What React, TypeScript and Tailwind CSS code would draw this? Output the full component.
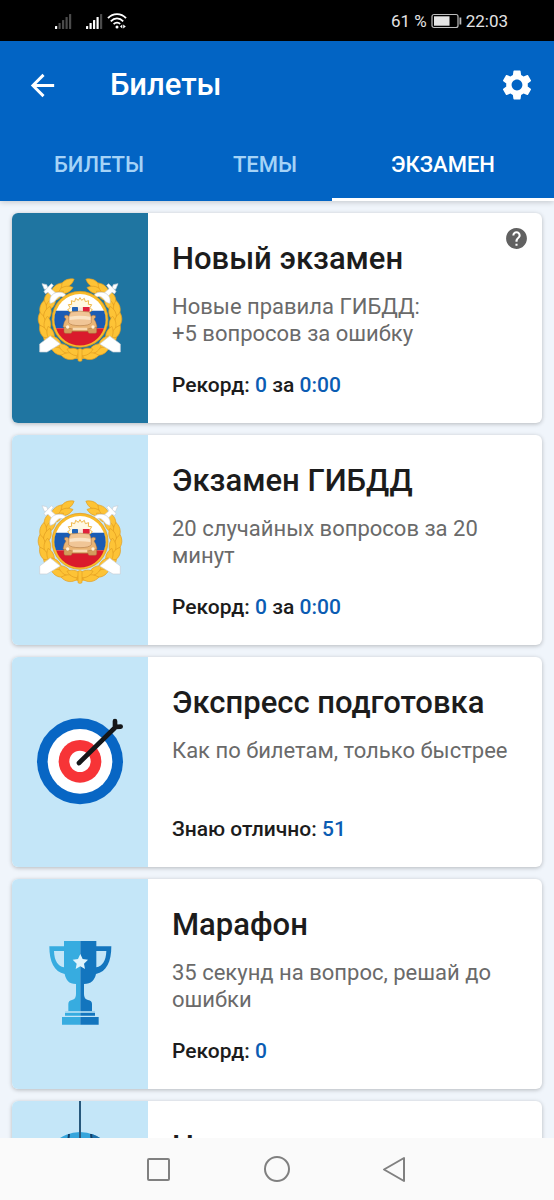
import type { ReactNode } from 'react'
import { MdArrowBack, MdHelp, MdSettings } from 'react-icons/md'

const tabs = [
  { label: 'БИЛЕТЫ', active: false },
  { label: 'ТЕМЫ', active: false },
  { label: 'ЭКЗАМЕН', active: true },
]

function Signal({ level }: { level: number }) {
  return (
    <svg viewBox="0 0 17 16" className="h-4 w-[17px]" aria-hidden="true">
      {[3, 6, 9, 12, 15].map((h, i) => (
        <rect
          key={h}
          x={i * 3.5}
          y={16 - h}
          width={2.2}
          height={h}
          rx={0.5}
          fill={i < level ? '#ffffff' : '#4b4b4b'}
        />
      ))}
    </svg>
  )
}

function Wifi() {
  return (
    <svg viewBox="0 0 20 16" className="h-4 w-5" fill="none" stroke="#fff" aria-hidden="true">
      <path d="M1 5.2C6-.2 14-.2 19 5.2" strokeWidth="1.9" />
      <path d="M3.8 8.3c3.6-3.8 8.8-3.8 12.4 0" strokeWidth="1.8" />
      <path d="M6.6 11.2c2-2.1 4.8-2.1 6.6-.3" strokeWidth="1.7" />
      <circle cx="10" cy="14" r="1.5" fill="#fff" stroke="none" />
      <path d="M15.3 11.4v4l-2.3-2zM16.2 11.4v4l2.6-2z" fill="#fff" stroke="none" />
    </svg>
  )
}

function StatusBar() {
  return (
    <div className="flex h-[41px] shrink-0 items-center justify-between bg-black pr-[46px] pl-[55px] text-[#e4e4e4]">
      <div className="flex items-center">
        <Signal level={1} />
        <span className="w-[14px]" />
        <Signal level={4} />
        <span className="w-1" />
        <Wifi />
      </div>
      <div className="flex items-center gap-1 text-[17px] leading-5">
        <span>61 %</span>
        <svg viewBox="0 0 31 16" className="h-4 w-[31px]" aria-hidden="true">
          <rect x="1" y="1.5" width="26" height="13" rx="2" fill="none" stroke="#bdbdbd" strokeWidth="1.2" />
          <rect x="3" y="3.3" width="15.5" height="9.4" fill="#e4e4e4" />
          <rect x="28.5" y="4.5" width="1.8" height="7" fill="#bdbdbd" />
        </svg>
        <span>22:03</span>
      </div>
    </div>
  )
}

// Leaf on the wreath: `turn` runs clockwise from the bottom tie, in degrees.
function Leaf({ turn, radius, tilt }: { turn: number; radius: number; tilt: number }) {
  const a = (turn * Math.PI) / 180
  const x = 165 - radius * Math.sin(a)
  const y = 160 + radius * Math.cos(a)
  return (
    <path
      d="M0 24C-14 10-13-10 0-25 13-10 14 10 0 24Z"
      transform={`translate(${x} ${y}) rotate(${turn - 90 + tilt})`}
      fill="#fdc336"
      stroke="#e39f22"
      strokeWidth="2"
    />
  )
}

const turns = [160, 142, 124, 106, 88, 70, 52, 34, 16]

function WreathHalf() {
  return (
    <>
      <path
        d="M162 267A107 107 0 0 1 130 59"
        fill="none"
        stroke="#f8b627"
        strokeWidth="24"
      />
      {turns.map((t) => (
        <g key={t}>
          <Leaf turn={t} radius={115} tilt={-10} />
          <Leaf turn={t - 7} radius={99} tilt={10} />
        </g>
      ))}
      <g fill="#fff" stroke="#c9ced6" strokeWidth="2" strokeLinejoin="round">
        <path d="M44 234v24h22l40-24-30-24Z" />
        <path d="m51 53 14 3 5 13-12 1Z" />
        <path d="m57 76 22-23 6 5-7 10 20 18-10 12-19-19-8 4Z" />
        <path d="M75 112c-4-22 12-36 32-33 12 1 18 9 17 17l-12-4c-10-3-14 3-20 10-4 6-9 9-17 10Z" />
      </g>
    </>
  )
}

function PoliceEmblem() {
  return (
    <svg viewBox="0 0 330 315" className="h-[105px] w-[110px]" aria-hidden="true">
      <WreathHalf />
      <g transform="translate(330 0) scale(-1 1)">
        <WreathHalf />
      </g>
      <rect x="159" y="248" width="12" height="38" rx="4" fill="#fdc336" stroke="#e39f22" strokeWidth="2" />
      <circle cx="165" cy="160" r="84" fill="#f9bb2b" stroke="#dc971c" strokeWidth="2" />
      <circle cx="165" cy="160" r="76" fill="#fff" />
      <path d="M93 134h144a76 76 0 0 1 0 53H93a76 76 0 0 1 0-53Z" fill="#1a5cb4" />
      <path d="M93 187h144a76 76 0 0 1-144 0Z" fill="#da1a2c" />
      <path
        d="m135 138-7-6 7-7-5-9 10-1-1-11 10 3 3-10 8 6 5-8 5 8 8-6 3 10 10-3-1 11 10 1-5 9 7 7-7 6Z"
        fill="#fff8e2"
        stroke="#efb848"
        strokeWidth="3"
        strokeLinejoin="round"
      />
      <rect x="141" y="123" width="18" height="14" rx="2" fill="#2163b8" />
      <rect x="173" y="123" width="21" height="14" rx="2" fill="#e0203c" />
      <rect x="159" y="124" width="14" height="13" fill="#f6e6da" />
      <g stroke="#a8713d" strokeWidth="1.5">
        <path d="M117 176h98v21q0 5-5 5h-17q-4 0-4-6h-48q0 6-4 6h-15q-5 0-5-5Z" fill="#d49c5c" />
        <path d="M119 149q6-4 14 3h64q8-7 14-3 3 5-4 10 7 8 9 24-51 14-102 0 2-16 9-24-7-5-4-10Z" fill="#e9b474" />
        <path d="M137 138q28-5 56 0 9 14 6 32-6 9-34 9t-34-9q-3-18 6-32Z" fill="#f0c596" />
      </g>
      <path d="M134 152q31-6 62 0v10q-31-5-62 0Z" fill="#fae3c6" />
      <path d="M143 185h44v8h-44Z" fill="#f8d8ae" />
      <circle cx="128" cy="183" r="5" fill="#fff0d8" />
      <circle cx="204" cy="183" r="5" fill="#fff0d8" />
    </svg>
  )
}

function Target() {
  return (
    <svg viewBox="0 6 330 330" className="size-[110px]" aria-hidden="true">
      <circle cx="165" cy="169" r="129" fill="#0866c4" />
      <circle cx="165" cy="169" r="97" fill="#fff" />
      <circle cx="165" cy="169" r="64" fill="#f73437" />
      <circle cx="165" cy="169" r="32" fill="#fff" />
      <path
        d="M162 174 272 66M270 48v18l17-1"
        fill="none"
        stroke="#151719"
        strokeWidth="14"
        strokeLinecap="round"
        strokeLinejoin="round"
      />
    </svg>
  )
}

function Trophy() {
  return (
    <svg viewBox="0 6 270 315" className="h-[105px] w-[90px]" aria-hidden="true">
      <path
        d="M87 33v16H43c0 46 14 77 46 83 4 18 12 30 34 30v30q0 16-12 18-11 2-11 12v22H90v14h-9v26h55V33ZM57 63h30v49C69 108 58 94 57 63Z"
        fill="#37ace0"
        fillRule="evenodd"
      />
      <path
        d="M184 33v16h45c0 46-14 77-46 83-4 18-14 30-36 30v30q0 16 12 18 12 2 12 12v22h9v14h11v26h-55V33ZM214 63h-30v49c18-4 29-18 30-49Z"
        fill="#1375be"
        fillRule="evenodd"
      />
      <path d="M80 244h112v4H80zM80 257h112v4H80z" fill="#c4e6f8" />
      <path d="m136 72 7 15 16 2-12 12 3 16-14-8-14 8 3-16-12-12 16-2Z" fill="#dff3fc" />
    </svg>
  )
}

function Globe() {
  return (
    <svg viewBox="0 0 136 210" className="h-[210px] w-full" aria-hidden="true">
      <circle cx="68" cy="67" r="36" fill="#35a5dc" />
      <path d="M80 33a36 36 0 0 1 0 68Z" fill="#1c6fa9" />
      <path d="M57 33q-4 34 0 68M79 33q4 34 0 68" fill="none" stroke="#123f68" strokeWidth="2" />
      <path d="M68 0v103" stroke="#27587c" strokeWidth="2" />
    </svg>
  )
}

function Value({ children }: { children: ReactNode }) {
  return <span className="text-[#0b5cb3]">{children}</span>
}

type ExamCardProps = {
  title: string
  description?: ReactNode
  footer?: ReactNode
  icon: ReactNode
  panel?: string
  help?: boolean
}

function ExamCard({ title, description, footer, icon, panel = 'bg-[#c4e6f8]', help }: ExamCardProps) {
  return (
    <article className="relative flex min-h-[210px] shrink-0 overflow-hidden rounded-md bg-white shadow-[0_1px_4px_rgba(0,0,0,0.25)]">
      <div className={`flex w-[136px] shrink-0 items-center justify-center ${panel}`}>{icon}</div>
      <div className="flex min-w-0 flex-1 flex-col px-6 pt-7 pb-6">
        <h2 className="text-[31px] leading-9 font-medium text-[#1c1c1c]">{title}</h2>
        <p className="mt-4 text-[22px] leading-[27px] text-[#6a6a6a]">{description}</p>
        <p className="mt-auto text-[21px] leading-7 font-medium text-[#1c1c1c]">{footer}</p>
      </div>
      {help && (
        <button type="button" aria-label="Справка" className="absolute top-[13px] right-[13px] text-[#616161]">
          <MdHelp className="size-[25px]" />
        </button>
      )}
    </article>
  )
}

function NavBar() {
  return (
    <div className="flex h-[62px] shrink-0 items-center justify-center gap-[90px] bg-[#fafafa] text-[#808080]">
      <button type="button" aria-label="Недавние">
        <svg viewBox="0 0 28 28" className="size-7" fill="none" stroke="currentColor" strokeWidth="2">
          <rect x="3" y="4" width="21" height="21" rx="1" />
        </svg>
      </button>
      <button type="button" aria-label="Домой">
        <svg viewBox="0 0 28 28" className="size-7" fill="none" stroke="currentColor" strokeWidth="2">
          <circle cx="14" cy="14" r="12" />
        </svg>
      </button>
      <button type="button" aria-label="Назад">
        <svg viewBox="0 0 28 28" className="size-7" fill="none" stroke="currentColor" strokeWidth="2" strokeLinejoin="round">
          <path d="M23 3v23L3 14.5Z" />
        </svg>
      </button>
    </div>
  )
}

export default function App() {
  return (
    <div className="flex h-screen flex-col bg-[#f0f5fb] font-[Roboto,sans-serif]">
      <StatusBar />

      <header className="z-10 shrink-0 bg-[#0264c4] text-white shadow-[0_1px_6px_rgba(0,0,0,0.2)]">
        <div className="flex h-[88px] items-center pr-[19px] pl-[25px]">
          <button type="button" aria-label="Назад">
            <MdArrowBack className="size-[35px]" />
          </button>
          <h1 className="ml-[50px] flex-1 text-[31px] leading-9 font-medium">Билеты</h1>
          <button type="button" aria-label="Настройки">
            <MdSettings className="size-9" />
          </button>
        </div>
        <nav role="tablist" className="grid h-[72px] grid-cols-[198fr_134fr_222fr]">
          {tabs.map((t) => (
            <button
              key={t.label}
              type="button"
              role="tab"
              aria-selected={t.active}
              className={`border-y-3 border-t-transparent text-[22px] leading-7 font-medium ${
                t.active ? 'border-b-white text-white' : 'border-b-transparent text-[#a5d3f7]'
              }`}
            >
              {t.label}
            </button>
          ))}
        </nav>
      </header>

      <main className="flex min-h-0 flex-1 flex-col gap-3 overflow-y-auto p-3 [scrollbar-width:none]">
        <ExamCard
          title="Новый экзамен"
          description={
            <>
              Новые правила ГИБДД:
              <br />
              +5 вопросов за ошибку
            </>
          }
          footer={
            <>
              Рекорд: <Value>0</Value> за <Value>0:00</Value>
            </>
          }
          icon={<PoliceEmblem />}
          panel="bg-[#1f75a1]"
          help
        />
        <ExamCard
          title="Экзамен ГИБДД"
          description="20 случайных вопросов за 20 минут"
          footer={
            <>
              Рекорд: <Value>0</Value> за <Value>0:00</Value>
            </>
          }
          icon={<PoliceEmblem />}
        />
        <ExamCard
          title="Экспресс подготовка"
          description="Как по билетам, только быстрее"
          footer={
            <>
              Знаю отлично: <Value>51</Value>
            </>
          }
          icon={<Target />}
        />
        <ExamCard
          title="Марафон"
          description="35 секунд на вопрос, решай до ошибки"
          footer={
            <>
              Рекорд: <Value>0</Value>
            </>
          }
          icon={<Trophy />}
        />
        <ExamCard title="Н" icon={<Globe />} />
      </main>

      <NavBar />
    </div>
  )
}
